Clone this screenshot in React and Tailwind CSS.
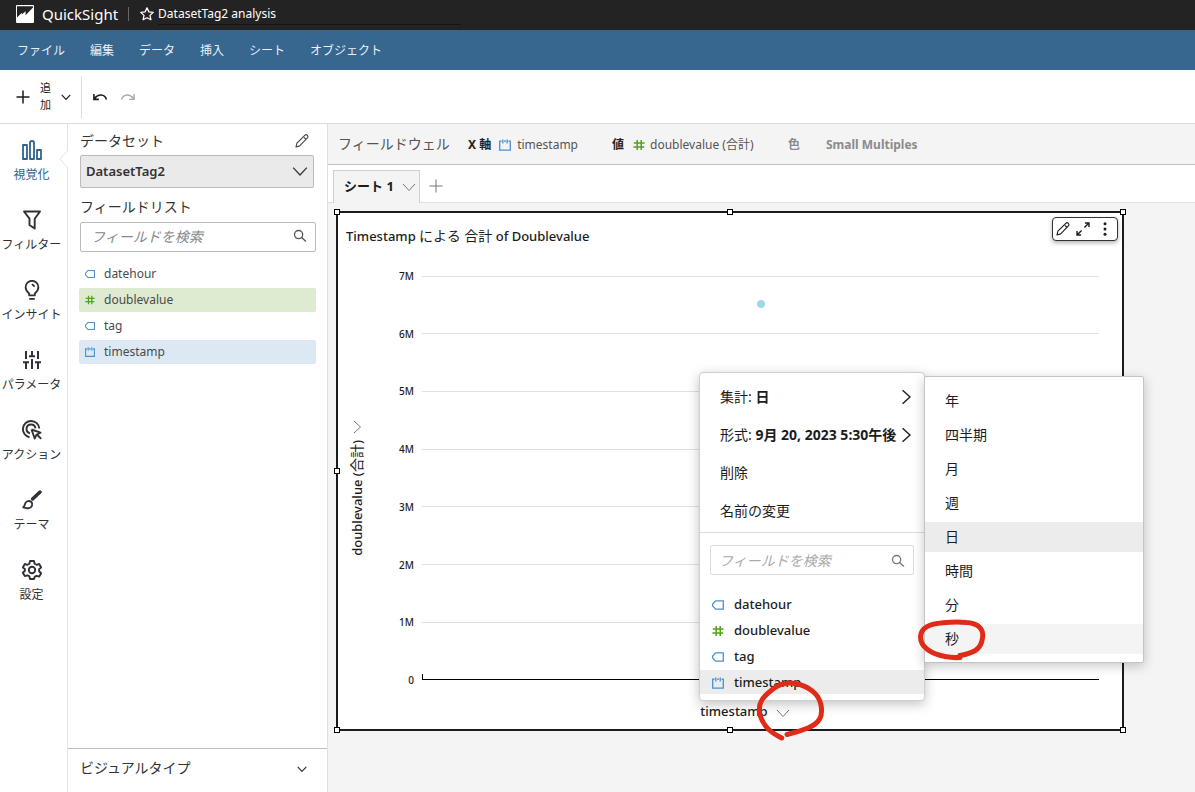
import React from "react";

const FONT = "font-['Noto_Sans','Noto_Sans_CJK_JP',sans-serif]";

function Chevron({ className, dir = "down", w = 1.2 }) {
  const d = dir === "down" ? "M1 4l6 6.5L13 4" : "M4 1l6.5 6L4 13";
  return (
    <svg viewBox="0 0 14 14" className={className} fill="none" stroke="currentColor" strokeWidth={w} aria-hidden="true">
      <path d={d} />
    </svg>
  );
}

function Logo() {
  return (
    <svg viewBox="0 0 18 18" className="h-[18px] w-[18px] shrink-0" aria-hidden="true">
      <rect width="18" height="18" rx="1" fill="#fff" />
      <path d="M1 1.2h16v1.4L9.600 10.200V6.200L5.800 9.600V7.800L1 12.400z" fill="#232323" />
    </svg>
  );
}

function Pencil({ className }) {
  return (
    <svg viewBox="0 0 14 14" className={className} fill="none" stroke="currentColor" strokeWidth="1.1" strokeLinejoin="round" aria-hidden="true">
      <path d="M1 13l.9-3.800L9.800 1.300a1.700 1.700 0 0 1 2.600 2.600L4.700 11.900z M9 3.400l1.700 1.600" />
    </svg>
  );
}

function Search({ className }) {
  return (
    <svg viewBox="0 0 14 14" className={className} fill="none" stroke="currentColor" strokeWidth="1.3" aria-hidden="true">
      <circle cx="5.6" cy="5.6" r="4.1" />
      <path d="M8.6 8.6l4.400 4" />
    </svg>
  );
}

function FieldIcon({ type, className }) {
  if (type === "number") {
    return (
      <svg viewBox="0 0 12 12" className={className} fill="none" stroke="#4fa31a" strokeWidth="1.5" aria-hidden="true">
        <path d="M4.200 1v10M8.200 1v10M.8 4h10.800M.4 8h10.800" />
      </svg>
    );
  }
  if (type === "date") {
    return (
      <svg viewBox="0 0 12 12" className={className} fill="none" stroke="#4a90d0" strokeWidth="1.3" aria-hidden="true">
        <path d="M2.600 2.200H.7v9h10.600v-9H9.400M5 2.200h2M3.800 .4v4M8.200 .4v4" />
      </svg>
    );
  }
  return (
    <svg viewBox="0 0 12 12" className={className} fill="none" stroke="#4a90d0" strokeWidth="1.3" aria-hidden="true">
      <path d="M3.600 1.800h7.700v8.400H3.600L.6 7V5z" />
    </svg>
  );
}

const railIcons = {
  visualize: (
    <g strokeWidth="1.8">
      <rect x="1" y="5" width="4" height="14" />
      <path d="M8 19V3q0-2 2-2t2 2v16z" />
      <rect x="15" y="10" width="4" height="9" />
    </g>
  ),
  filter: <path d="M2 1.5h16l-5.3 7.2v9.8L7.5 15V8.7z" strokeWidth="1.9" />,
  insight: (
    <g strokeWidth="1.8">
      <path d="M7.2 15.4v-1.7C5 11.6 3.6 9.8 3.6 7.2a6.4 6.4 0 0 1 12.8 0c0 2.600-1.400 4.400-3.600 6.500v1.700z" />
      <path d="M7.200 18.900h5.600M10 4.200l2.600 2.400" />
    </g>
  ),
  params: (
    <path d="M4 1v8M1 12.200h6M4 12v7M10 1v5M7 6.200h6M10 9v10M16 1v8M13 12.200h6M16 12v7" strokeWidth="2" />
  ),
  action: (
    <g strokeWidth="1.900">
      <path d="M7.500 17.200A8.200 8.200 0 1 1 17.300 8.500M8 13.400A4.500 4.500 0 1 1 13.500 8.400" />
      <path d="M9.500 9.500l9 3.200-3.600 1.800 4.300 4.300M9.500 9.500l3.200 9 1.800-3.800" />
    </g>
  ),
  theme: (
    <g>
      <path d="M18 2l-7.400 7" strokeWidth="3.400" strokeLinecap="round" />
      <path d="M9.400 12c2 2 .4 6-3 6.300-2.200.2-3.600-.6-5.200-1 1.800-1 1.200-2.400 2-4 1.100-2.400 4.200-2.900 6.200-1.300z" strokeWidth="1.900" />
    </g>
  ),
  settings: (
    <g strokeWidth="1.900">
      <path d="M8 1h4l.6 2.700 1.900 1.100 2.700-.8 2 3.400-2.100 1.900v1.900l2.100 2-2 3.400-2.700-.8-1.900 1.100L12 19H8l-.6-2.600-1.900-1.100-2.700.8-2-3.400 2.100-2V8.900L.8 7.400l2-3.400 2.700.8 1.900-1.100z" />
      <circle cx="10" cy="10" r="3.200" />
    </g>
  ),
};

const railItems = [
  { id: "visualize", label: "視覚化", active: true },
  { id: "filter", label: "フィルター" },
  { id: "insight", label: "インサイト" },
  { id: "params", label: "パラメータ" },
  { id: "action", label: "アクション" },
  { id: "theme", label: "テーマ" },
  { id: "settings", label: "設定" },
];

const fields = [
  { name: "datehour", type: "string", used: "" },
  { name: "doublevalue", type: "number", used: "bg-[#deebd0]" },
  { name: "tag", type: "string", used: "" },
  { name: "timestamp", type: "date", used: "bg-[#dce9f4]" },
];

const ticks = ["7M", "6M", "5M", "4M", "3M", "2M", "1M", "0"];
const units = ["年", "四半期", "月", "週", "日", "時間", "分", "秒"];
const menuBar = ["ファイル", "編集", "データ", "挿入", "シート", "オブジェクト"];

function Header() {
  return (
    <header className="flex h-[30px] items-center bg-[#232323] pb-0.5 pl-4 text-white">
      <Logo />
      <span className="ml-2 text-[15px] leading-5">QuickSight</span>
      <span className="ml-2.5 mr-[11px] h-3.5 w-px bg-[#666]" />
      <button type="button" aria-label="お気に入り">
        <svg viewBox="0 0 14 14" className="h-3.5 w-3.5" fill="none" stroke="#fff" strokeWidth="1.300" strokeLinejoin="round" aria-hidden="true">
          <path d="M7 .9l1.900 4 4.300.5-3.200 3 .9 4.400L7 10.700l-3.900 2.100.9-4.400-3.200-3 4.300-.5z" />
        </svg>
      </button>
      <h1 className="ml-1 w-[303px] border-b border-[#141414] text-[12px] leading-5">DatasetTag2 analysis</h1>
    </header>
  );
}

function Rail() {
  return (
    <nav className="flex w-[68px] shrink-0 flex-col border-r border-[#e3e3e3] bg-white">
      {railItems.map((it) => (
        <button
          key={it.id}
          type="button"
          className={
            "relative flex h-[70px] flex-col items-center gap-[7px] whitespace-nowrap pr-1 pt-4 text-[12px] leading-4 " +
            (it.active ? "text-[#2f6490]" : "text-[#2f3136]")
          }
        >
          <svg viewBox="0 0 20 20" className="h-5 w-5" fill="none" stroke="currentColor" strokeLinejoin="round" aria-hidden="true">
            {railIcons[it.id]}
          </svg>
          <span>{it.label}</span>
          {it.active && (
            <svg viewBox="0 0 9 18" className="absolute -right-px top-[26px] h-[18px] w-[9px]" fill="#fff" stroke="#e3e3e3" aria-hidden="true">
              <path d="M9 0L1 9l8 9" />
            </svg>
          )}
        </button>
      ))}
    </nav>
  );
}

function Sidebar() {
  return (
    <aside className="flex w-[260px] shrink-0 flex-col border-r border-[#e0e0e0] bg-white text-[#333]">
      <div className="flex-1 pl-3 pr-[11px] pt-1.5">
        <div className="flex h-[25px] items-start justify-between pr-[7px]">
          <label htmlFor="dataset" className="text-[14px] leading-[22px]">データセット</label>
          <button type="button" aria-label="データセットを編集" className="pt-1">
            <Pencil className="h-3.5 w-3.5 text-[#444]" />
          </button>
        </div>
        <div className="relative mr-0.5">
          <select id="dataset" className="h-[33px] w-full appearance-none rounded-xs border border-[#bbb] bg-[#eaeaea] pl-[5px] text-[13px] font-semibold text-[#333]">
            <option>DatasetTag2</option>
          </select>
          <Chevron className="pointer-events-none absolute right-1.5 top-2 h-4 w-4 text-[#333]" w={1.1} />
        </div>
        <label htmlFor="fields" className="mt-2 block text-[14px] leading-[22px]">フィールドリスト</label>
        <div className="relative mt-1">
          <input id="fields" placeholder="フィールドを検索" className="block h-[30px] w-full rounded-xs border border-[#bbb] pb-0.5 pl-2.5 text-[14px] italic placeholder:text-[#888]" />
          <Search className="pointer-events-none absolute right-[9px] top-[7px] h-3.5 w-3.5 text-[#555]" />
        </div>
        <ul className="-ml-px mt-2.5 flex flex-col gap-0.5">
          {fields.map((f) => (
            <li key={f.name}>
              <button type="button" className={"flex h-6 w-full items-center gap-[9px] rounded-xs pl-1.5 text-[12px] text-[#4a4a4a] " + f.used}>
                <FieldIcon type={f.type} className="h-2.5 w-2.5" />
                {f.name}
              </button>
            </li>
          ))}
        </ul>
      </div>
      <button type="button" className="flex h-11 items-center justify-between border-t border-[#bdbdbd] pb-1 pl-3 pr-5 text-[14px]">
        <span className="pb-0.5">ビジュアルタイプ</span>
        <Chevron className="h-2.5 w-2.5" w={1.6} />
      </button>
    </aside>
  );
}

function FieldWells() {
  return (
    <div className="flex h-[41px] items-center whitespace-nowrap border-b border-[#bfbfbf] bg-[#f4f4f4] pl-2.5 pt-0.5 text-[12px] text-[#555]">
      <span className="w-[130px] pb-1 text-[14px]">フィールドウェル</span>
      <div className="flex w-36 items-center">
        <span className="mr-2 font-bold text-[#222]">X 軸</span>
        <FieldIcon type="date" className="mr-1.5 h-3 w-3" />
        timestamp
      </div>
      <div className="flex w-44 items-center">
        <span className="mr-[9px] font-bold text-[#222]">値</span>
        <FieldIcon type="number" className="mr-[5px] h-3 w-3" />
        doublevalue (合計)
      </div>
      <span className="w-[38px] font-bold text-[#8b8b8b]">色</span>
      <span className="font-bold text-[#8b8b8b]">Small Multiples</span>
    </div>
  );
}

function SheetTabs() {
  return (
    <div className="flex h-[38px] items-end border-b border-[#e0e0e0] bg-white pl-[5px]">
      <button type="button" className="-mb-px flex h-[33px] w-[87px] items-center justify-between border border-b-0 border-[#d0d0d0] bg-[#f4f4f4] pl-2.5 pr-[3px] text-[13px] font-bold text-[#1c1c1c]">
        シート 1
        <Chevron className="h-3.5 w-3.5 text-[#777]" w={1} />
      </button>
      <button type="button" aria-label="シートを追加" className="flex h-8 w-8 items-center justify-center text-[#777]">
        <svg viewBox="0 0 14 14" className="h-3.5 w-3.5" fill="none" stroke="currentColor" aria-hidden="true">
          <path d="M7 .5v13M.5 7h13" />
        </svg>
      </button>
    </div>
  );
}

function Handle({ className }) {
  return <span className={"absolute h-1.5 w-1.5 border border-black bg-white " + className} />;
}

function AxisMenu() {
  return (
    <div role="menu" className="absolute left-[361px] top-[159px] w-[226px] rounded-sm border border-[#cfcfcf] bg-white pb-1.5 pt-[5px] text-[14px] text-[#1c1c1c] shadow-[0_3px_12px_rgba(0,0,0,0.25)]">
      <div className="border-b border-[#dcdcdc] pb-0.5">
        <button type="button" role="menuitem" className="flex h-[38px] w-full items-center justify-between whitespace-nowrap pl-5 pr-2.5">
          <span className="pb-0.5">集計: <b>日</b></span>
          <Chevron dir="right" className="h-4 w-4" />
        </button>
        <button type="button" role="menuitem" className="flex h-[38px] w-full items-center justify-between whitespace-nowrap pl-5 pr-2.5">
          <span className="pb-0.5">形式: <b>9月 20, 2023 5:30午後</b></span>
          <Chevron dir="right" className="h-4 w-4 shrink-0" />
        </button>
        <button type="button" role="menuitem" className="flex h-[38px] w-full items-center pb-0.5 pl-5">削除</button>
        <button type="button" role="menuitem" className="flex h-[38px] w-full items-center pb-0.5 pl-5">名前の変更</button>
      </div>
      <div className="relative mx-2.5 mt-3">
        <input aria-label="フィールドを検索" placeholder="フィールドを検索" className="block h-[30px] w-full rounded-xs border border-[#dcdcdc] pl-2 text-[14px] italic placeholder:text-[#aaa]" />
        <Search className="pointer-events-none absolute right-[9px] top-[9px] h-3.5 w-3.5 text-[#777]" />
      </div>
      <div className="mt-[17px] flex flex-col gap-0.5">
        {fields.map((f) => (
          <button
            key={f.name}
            type="button"
            role="menuitem"
            className={"flex h-6 w-full items-center gap-2.5 pl-3 pt-0.5 text-[13px] font-medium " + (f.type === "date" ? "bg-[#ececec]" : "")}
          >
            <FieldIcon type={f.type} className="h-3 w-3" />
            {f.name}
          </button>
        ))}
      </div>
    </div>
  );
}

function UnitMenu() {
  const tone = { 日: "bg-[#ececec]", 秒: "bg-[#f4f4f4]" };
  return (
    <div role="menu" className="absolute left-[586px] top-[163px] flex w-[220px] flex-col gap-1 rounded-xs border border-[#c4c4c4] bg-white pb-2 pt-[9px] text-[14px] text-[#1c1c1c] shadow-[0_3px_12px_rgba(0,0,0,0.22)]">
      {units.map((u) => (
        <button key={u} type="button" role="menuitem" className={"flex h-[30px] w-full items-center pb-0.5 pl-5 " + (tone[u] || "")}>
          {u}
        </button>
      ))}
    </div>
  );
}

function Visual() {
  return (
    <section className="relative ml-2 mr-[71px] mt-2 flex h-[520px] flex-col border-2 border-[#1b1b1f] bg-white text-[#1c1c1c]">
      <h2 className="pl-2 pt-3 text-[13px] font-medium leading-[22px]">
        Timestamp <span className="text-[14px] font-normal">による 合計</span> of Doublevalue
      </h2>
      <div className="flex flex-1">
        <button type="button" className="flex w-[38px] flex-col items-center pt-[173px] text-[13px] font-medium">
          <Chevron dir="right" className="h-3.5 w-3.5 text-[#777]" w={1} />
          <span className="mt-1.5 rotate-180 whitespace-nowrap leading-5 [text-orientation:sideways] [writing-mode:vertical-rl]">
            doublevalue (<span className="text-[14px] font-normal">合計</span>)
          </span>
        </button>
        <div className="flex flex-1 flex-col pr-[23px] pt-[21px]">
          <div className="relative flex h-[420px] flex-col justify-between">
            {ticks.map((t) => (
              <div key={t} className="flex h-4 items-center">
                <span className="w-[38px] text-right text-[10px] font-medium leading-4">{t}</span>
                {t === "0" ? (
                  <span className="ml-2 -mt-1.5 h-1.5 flex-1 border-b border-l border-black" />
                ) : (
                  <span className="ml-2 h-px flex-1 bg-[#e0e0e0]" />
                )}
              </div>
            ))}
            <div className="absolute bottom-2 left-[46px] right-0 top-2">
              <span
                className="absolute h-2 w-2 -translate-x-1/2 -translate-y-1/2 rounded-full bg-[#a3d7e8]"
                style={{ left: "50%", top: "7%" }}
              />
            </div>
          </div>
          <button type="button" className="flex items-center justify-center gap-2 pl-[15px] pt-3 text-[13px] font-medium leading-[22px]">
            timestamp
            <Chevron className="mt-1 h-3.5 w-3.5 text-[#777]" w={1} />
          </button>
        </div>
      </div>

      <div className="absolute right-1 top-1 flex h-6 w-[66px] items-center rounded-sm border border-[#333] bg-white pl-[3px] shadow-[0_2px_4px_rgba(0,0,0,0.3)]">
        <button type="button" aria-label="編集"><Pencil className="h-3.5 w-3.5" /></button>
        <button type="button" aria-label="最大化" className="ml-1.5">
          <svg viewBox="0 0 14 14" className="h-3.5 w-3.5" fill="none" stroke="currentColor" strokeWidth="1.400" aria-hidden="true">
            <path d="M9 1h4v4M13 1L8.400 5.600M5 13H1V9M1 13l4.600-4.600" />
          </svg>
        </button>
        <button type="button" aria-label="メニュー" className="ml-3">
          <svg viewBox="0 0 6 14" className="h-3.5 w-1.5" fill="currentColor" aria-hidden="true">
            <circle cx="3" cy="1.800" r="1.500" />
            <circle cx="3" cy="7" r="1.500" />
            <circle cx="3" cy="12.200" r="1.500" />
          </svg>
        </button>
      </div>

      <Handle className="-left-1 -top-1" />
      <Handle className="-top-1 left-1/2 -translate-x-1/2" />
      <Handle className="-right-1 -top-1" />
      <Handle className="-left-1 top-1/2 -translate-y-1/2" />
      <Handle className="-bottom-1 -left-1" />
      <Handle className="-bottom-1 left-1/2 -translate-x-1/2" />
      <Handle className="-bottom-1 -right-1" />

      <AxisMenu />
      <UnitMenu />

      <svg
        viewBox="338 213 784 516"
        className="pointer-events-none absolute left-0 top-0 h-[516px] w-[784px] overflow-visible"
        fill="none"
        stroke="#e02b18"
        strokeWidth="5"
        strokeLinecap="round"
        strokeLinejoin="round"
        aria-hidden="true"
      >
        <path d="M960 655.500C973 653 981 650 982.500 638C984 629 978 623 966 622.500C958 621.500 951 622 943 622.800C930 624 921 627 920.500 637C920.500 647 931 654 945 656.500Q953 658 960 657.500" />
        <path d="M781.700 738C772 733 764 728 760 715C757 702 764 696 773 689C780 684 787 682 795 683.500C809 686 819 694 821 705C823 716 820 723 808 728Q798 732 787 734.500" />
      </svg>
    </section>
  );
}

export default function App() {
  return (
    <div className={"flex min-h-screen flex-col overflow-hidden bg-white " + FONT}>
      <Header />
      <nav className="flex h-10 items-center gap-[25px] bg-[#37668f] pl-[17px] pt-0.5 text-[12px] text-[#e9f0f6]">
        {menuBar.map((m) => (
          <button key={m} type="button">{m}</button>
        ))}
      </nav>
      <div className="flex h-[54px] items-center border-b border-[#dcdcdc] text-[#1c1c1c]">
        <button type="button" className="flex h-[42px] items-center border-r border-[#dcdcdc] pl-4 pr-2.5">
          <svg viewBox="0 0 14 14" className="h-3.5 w-3.5" fill="none" stroke="currentColor" strokeWidth="1.500" aria-hidden="true">
            <path d="M7 .5v13M.5 7h13" />
          </svg>
          <span className="ml-2.5 w-[11px] pb-0.5 text-[11px] leading-[17px]">追加</span>
          <Chevron className="ml-2.5 h-2.5 w-2.5" w={1.600} />
        </button>
        <button type="button" aria-label="元に戻す" className="ml-[11px]">
          <svg viewBox="0 0 14 8" className="h-2 w-3.5" fill="none" stroke="currentColor" strokeWidth="1.600" aria-hidden="true">
            <path d="M13.500 6.500C11.500 1 5.500.5 1.500 5.500M.9 1v5.400h5" />
          </svg>
        </button>
        <button type="button" aria-label="やり直す" className="ml-3.5 text-[#aaa]">
          <svg viewBox="0 0 14 8" className="h-2 w-3.5" fill="none" stroke="currentColor" strokeWidth="1.400" aria-hidden="true">
            <path d="M.5 6.500C2.500 1 8.500.5 12.500 5.500M13.100 1v5.400h-5" />
          </svg>
        </button>
      </div>
      <div className="flex flex-1">
        <Rail />
        <Sidebar />
        <main className="flex min-w-0 flex-1 flex-col bg-[#f4f4f4]">
          <FieldWells />
          <SheetTabs />
          <Visual />
        </main>
      </div>
    </div>
  );
}
